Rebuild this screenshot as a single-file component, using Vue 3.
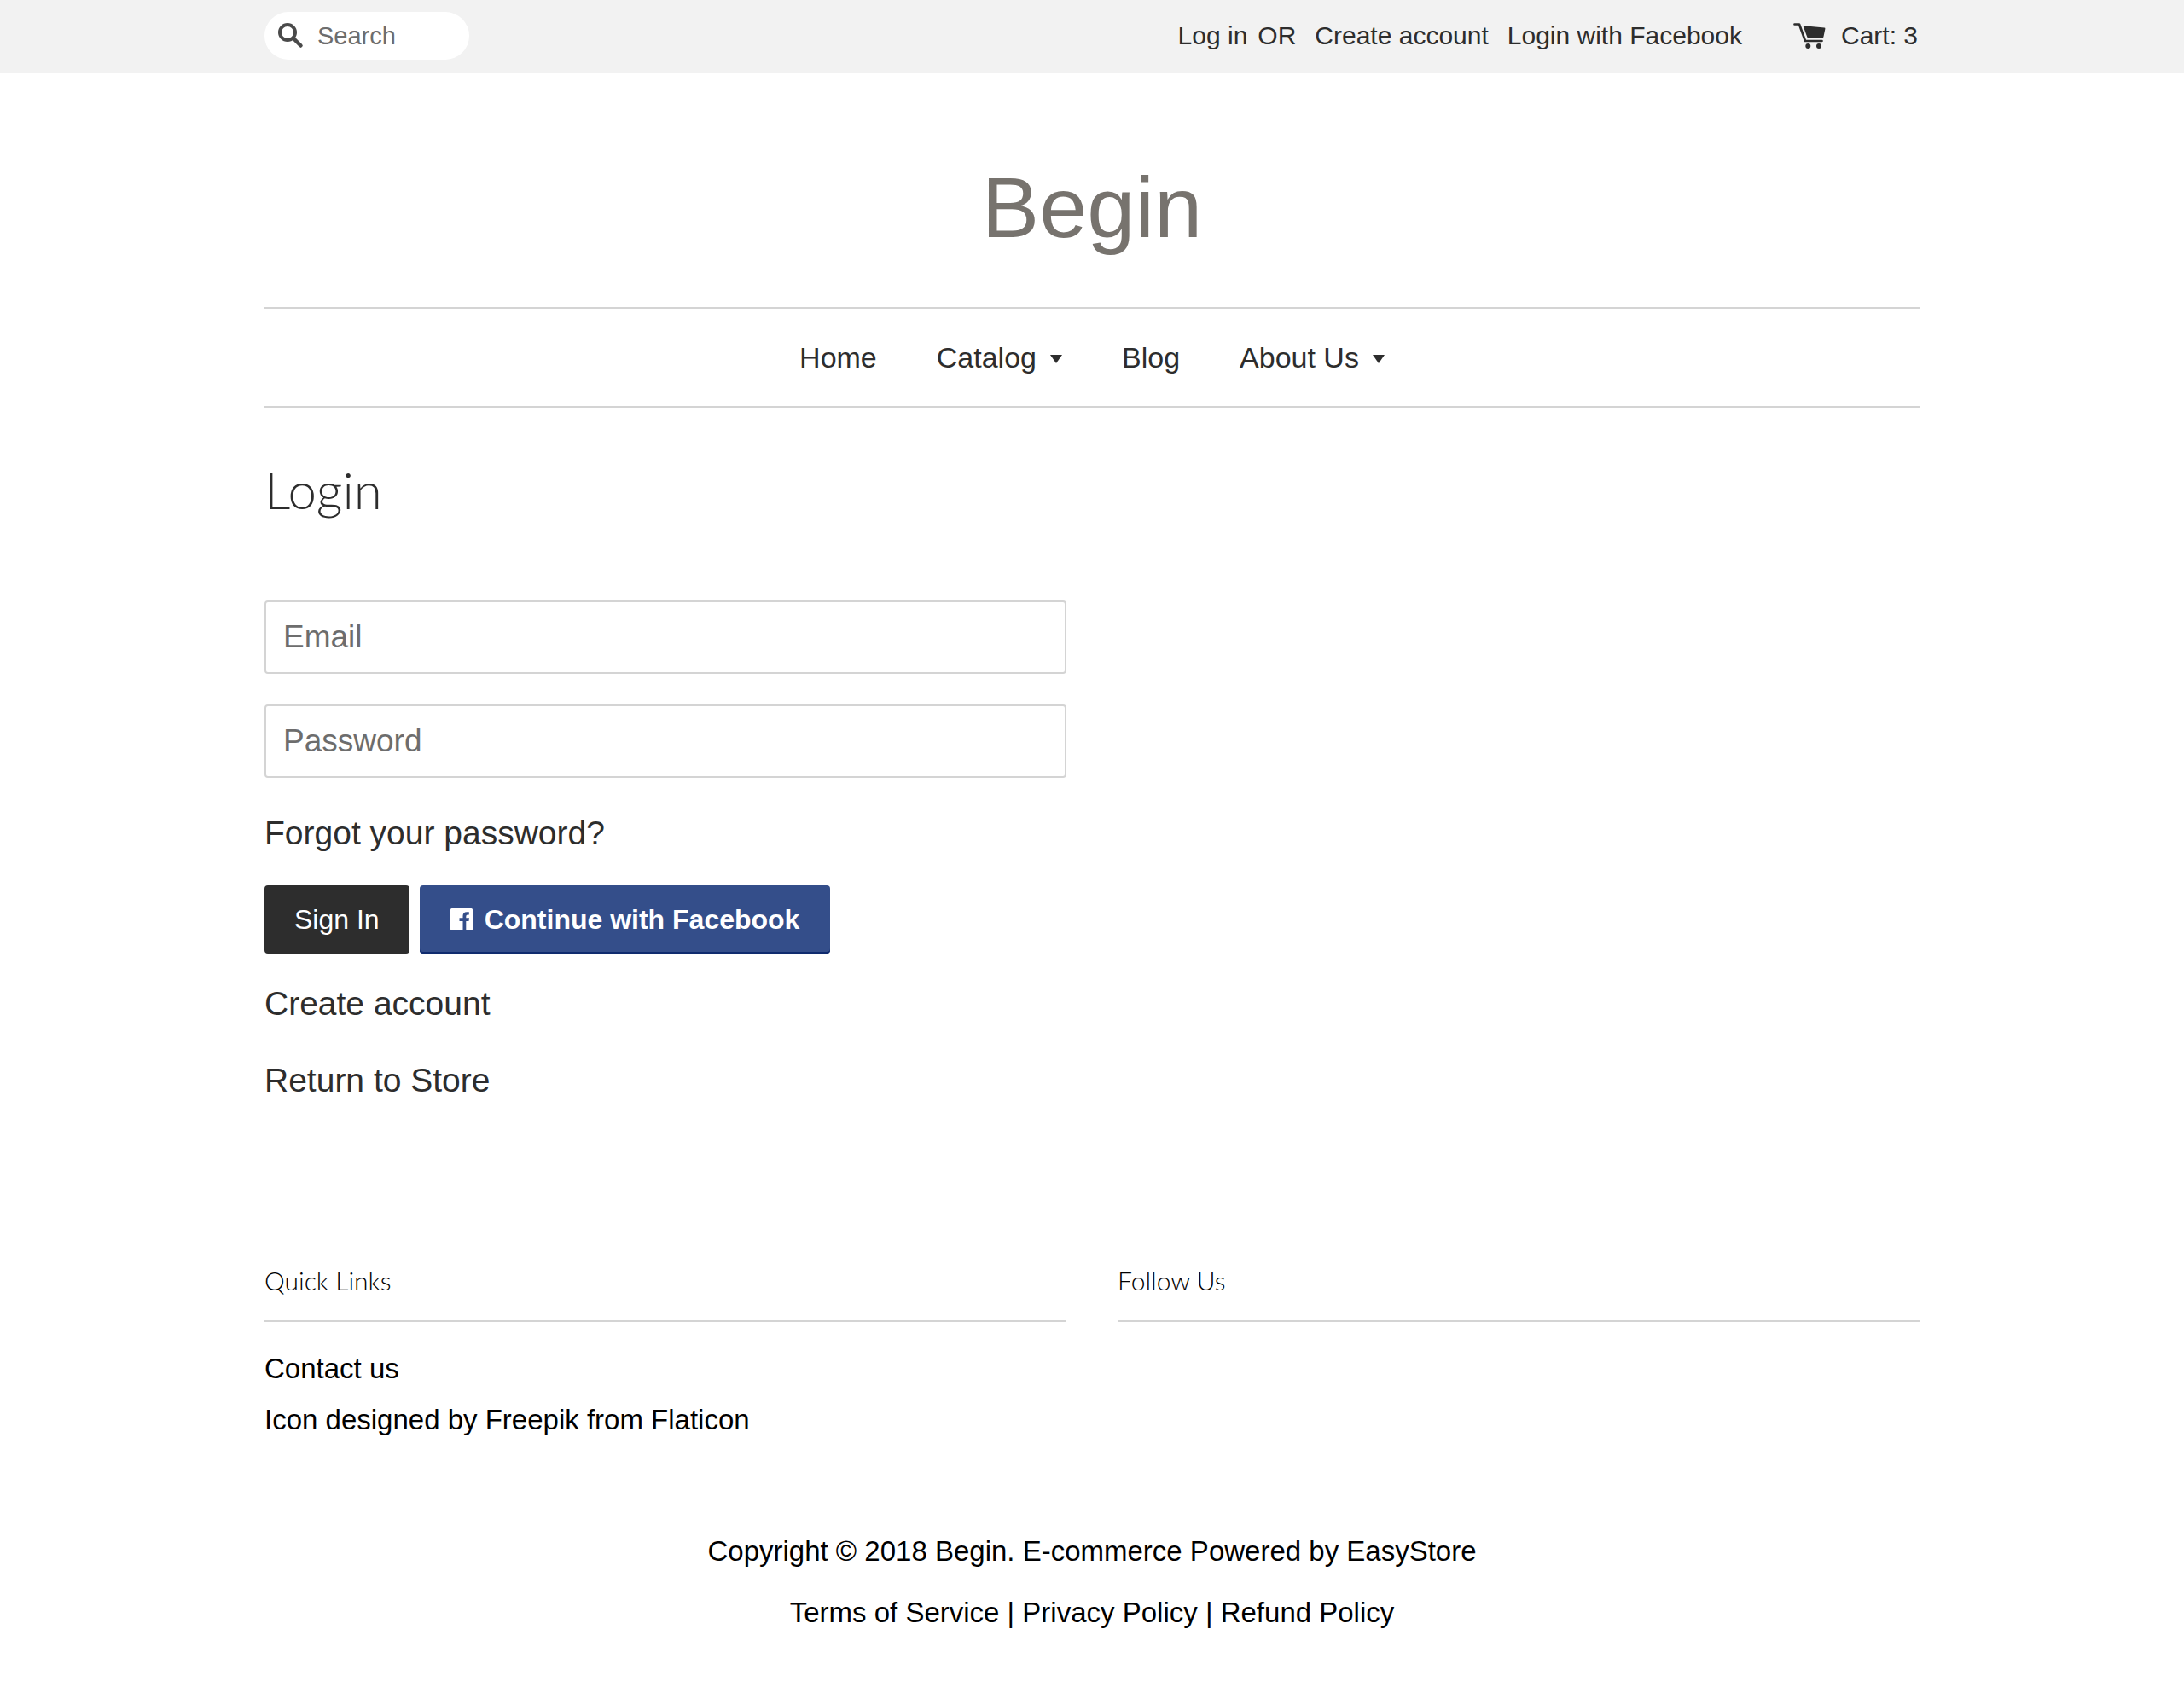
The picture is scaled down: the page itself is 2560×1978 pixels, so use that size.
<script setup>
const quickLinks = ['Contact us', 'Icon designed by Freepik from Flaticon']
const menu = [
  { label: 'Home' },
  { label: 'Catalog', dropdown: true },
  { label: 'Blog' },
  { label: 'About Us', dropdown: true },
]
</script>

<template>
  <div class="page">
    <header>
      <div class="topbar">
        <div class="wrap topbar-row">
          <form class="search" role="search" @submit.prevent>
            <button class="search-button" type="submit" aria-label="Search">
              <svg width="30" height="30" viewBox="0 0 30 30" fill="none" stroke="#4a4a4a">
                <circle cx="11" cy="11" r="9" stroke-width="4" />
                <path d="M18 18l8.500 8.500" stroke-width="4.500" stroke-linecap="round" />
              </svg>
            </button>
            <input class="search-input" type="search" placeholder="Search" aria-label="Search" />
          </form>
          <div class="account">
            <span class="login-or"><a href="#">Log in</a><span>OR</span></span>
            <a href="#">Create account</a>
            <a href="#">Login with Facebook</a>
            <a href="#" class="cart">
              <svg width="38" height="30" viewBox="0 0 38 30" fill="#2d2d2d">
                <path d="M1.500 1.500H7L14 21h19.500" fill="none" stroke="#2d2d2d" stroke-width="2.700" stroke-linecap="round" stroke-linejoin="round" />
                <path d="M12.500 3.300l24 2.300q1 .1.900 1.100l-2 9.600q-.2 1-1.200 1H17.500q-1 0-1.300-1L11.800 4.300q-.2-1 .7-1z" />
                <circle cx="17.300" cy="27" r="3" />
                <circle cx="30" cy="27" r="3" />
              </svg>
              <span>Cart: 3</span>
            </a>
          </div>
        </div>
      </div>
      <div class="wrap">
        <div class="logo"><a href="#">Begin</a></div>
        <nav class="menu">
          <a v-for="item in menu" :key="item.label" href="#">
            {{ item.label }}
            <svg v-if="item.dropdown" width="14" height="10" viewBox="0 0 14 10" fill="#2d2d2d">
              <path d="M0 0h14L7 10z" />
            </svg>
          </a>
        </nav>
      </div>
    </header>

    <main class="wrap columns">
      <section>
        <h1>Login</h1>
        <form @submit.prevent>
          <input class="field" type="email" placeholder="Email" aria-label="Email" />
          <input class="field" type="password" placeholder="Password" aria-label="Password" />
          <p class="forgot"><a href="#">Forgot your password?</a></p>
          <div class="actions">
            <button class="btn" type="submit">Sign In</button>
            <button class="btn facebook" type="button">
              <svg width="26" height="26" viewBox="0 0 26 26">
                <path fill="#fff" fill-rule="evenodd" d="M1.500 0h23Q26 0 26 1.500v23Q26 26 24.500 26H18.300V15h3.200l.5-3.700h-3.700V9.500Q18.300 7.500 20 7.500h1.800V4.200h-2.700Q14.500 4.200 14.500 9v2.300h-4V15h4v11h-13Q0 26 0 24.500v-23Q0 0 1.500 0z" />
              </svg>
              Continue with Facebook
            </button>
          </div>
        </form>
        <p class="link"><a href="#">Create account</a></p>
        <p class="link"><a href="#">Return to Store</a></p>
      </section>
    </main>

    <footer class="wrap">
      <div class="columns">
        <section>
          <h2>Quick Links</h2>
          <ul>
            <li v-for="link in quickLinks" :key="link"><a href="#">{{ link }}</a></li>
          </ul>
        </section>
        <section>
          <h2>Follow Us</h2>
        </section>
      </div>
      <div class="legal">
        <p>Copyright © 2018 Begin. <a href="#">E-commerce Powered by EasyStore</a></p>
        <p><a href="#">Terms of Service</a> | <a href="#">Privacy Policy</a> | <a href="#">Refund Policy</a></p>
      </div>
    </footer>
  </div>
</template>

<style>
body {
  margin: 0;
  background: #fff;
}
</style>

<style scoped>
.page {
  color: #2d2d2d;
  font-family: "Liberation Sans", Arial, sans-serif;
  font-size: 39px;
  line-height: 60px;
}
.page * {
  box-sizing: border-box;
}
a {
  color: inherit;
  text-decoration: none;
}
p,
ul {
  margin: 0;
  padding: 0;
  list-style: none;
}
svg {
  display: block;
  flex: none;
}
button,
input {
  font-family: inherit;
  border: 0;
}
.wrap {
  max-width: 2060px;
  margin: 0 auto;
  padding: 0 60px;
}
.topbar {
  background: #f2f2f2;
  font-size: 30px;
}
.topbar-row {
  display: flex;
  align-items: center;
  justify-content: space-between;
  height: 86px;
}
.search {
  display: flex;
  align-items: center;
  width: 240px;
  height: 56px;
  margin-bottom: 2px;
  padding-left: 16px;
  border-radius: 28px;
  background: #fff;
}
.search-button {
  padding: 0;
  background: none;
}
.search-input {
  width: 160px;
  padding: 0 0 0 16px;
  background: none;
  font-size: 29px;
}
input::placeholder {
  color: #6d6d6d;
  opacity: 1;
}
.account {
  display: flex;
  align-items: center;
  gap: 22px;
  padding: 0 2px 2px 0;
}
.login-or {
  display: flex;
  gap: 12px;
}
.cart {
  display: flex;
  align-items: center;
  gap: 18px;
  margin-left: 38px;
}
.logo {
  padding: 97px 0 57px;
  color: #77736e;
  font-size: 101px;
  line-height: 120px;
  text-align: center;
}
.menu {
  display: flex;
  justify-content: center;
  gap: 70px;
  padding: 27px 0;
  border-top: 2px solid #d4d4d4;
  border-bottom: 2px solid #d4d4d4;
  font-size: 34px;
}
.menu a {
  display: flex;
  align-items: center;
  gap: 16px;
}
.menu svg {
  margin-top: 4px;
}
.columns {
  display: grid;
  grid-template-columns: 1fr 1fr;
  gap: 60px;
}
h1,
h2 {
  margin: 0;
  font-family: Lato, sans-serif;
  font-weight: 300;
}
h1 {
  margin: 60px 0 94px;
  font-size: 60px;
  line-height: 72px;
}
.field {
  display: block;
  width: 100%;
  height: 86px;
  margin-bottom: 36px;
  padding: 0 20px;
  border: 2px solid #d4d4d4;
  border-radius: 4px;
  font-size: 37px;
}
.forgot {
  margin: -1px 0 31px;
}
.actions {
  display: flex;
  gap: 12px;
  margin-bottom: 29px;
}
.btn {
  display: flex;
  align-items: center;
  gap: 14px;
  height: 80px;
  padding: 0 35px;
  border-radius: 4px;
  background: #2d2d2d;
  color: #fff;
  font-size: 32px;
}
.facebook {
  padding: 0 36px;
  background: #344e8a;
  box-shadow: inset 0 -2px #0f2b6e;
  font-weight: bold;
}
.link {
  margin-bottom: 30px;
}
footer {
  color: #000;
  font-size: 33px;
}
footer .columns {
  padding-top: 156px;
}
h2 {
  margin-bottom: 25px;
  padding-bottom: 29px;
  border-bottom: 2px solid #d4d4d4;
  font-size: 30px;
  line-height: 36px;
}
.legal {
  display: grid;
  gap: 12px;
  padding: 94px 0 57px;
  text-align: center;
}
</style>
